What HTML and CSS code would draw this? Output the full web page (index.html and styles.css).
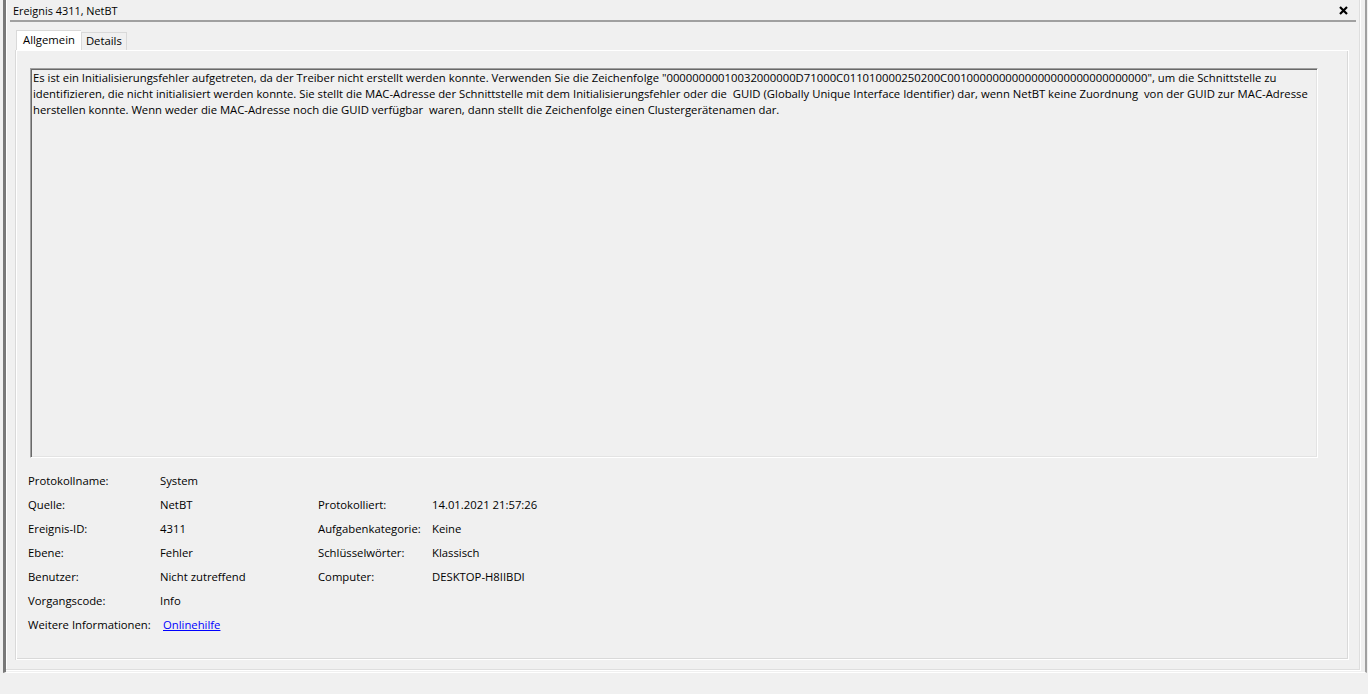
FILE: index.html
```html
<!DOCTYPE html>
<html lang="de">
<head>
    <meta charset="UTF-8">
    <title>Ereignis 4311, NetBT</title>
    <link rel="stylesheet" href="styles.css">
</head>
<body>
<div class="window">
    <div class="frame">
        <div class="titlebar">
            <span class="title">Ereignis 4311, NetBT</span>
            <span class="close">
                <svg width="9" height="9" viewBox="0 0 9 9"><path d="M1 1L8 8M8 1L1 8" stroke="#000" stroke-width="2.2" fill="none"/></svg>
            </span>
        </div>
        <div class="tabs">
            <div class="tab active">Allgemein</div>
            <div class="tab">Details</div>
        </div>
        <div class="panel">
            <div class="description">Es ist ein Initialisierungsfehler aufgetreten, da der Treiber nicht erstellt werden konnte. Verwenden Sie die Zeichenfolge "00000000010032000000D71000C011010000250200C0010000000000000000000000000000", um die Schnittstelle zu<br>identifizieren, die nicht initialisiert werden konnte. Sie stellt die MAC-Adresse der Schnittstelle mit dem Initialisierungsfehler oder die&nbsp; GUID (Globally Unique Interface Identifier) dar, wenn NetBT keine Zuordnung&nbsp; von der GUID zur MAC-Adresse<br>herstellen konnte. Wenn weder die MAC-Adresse noch die GUID verfügbar&nbsp; waren, dann stellt die Zeichenfolge einen Clustergerätenamen dar.</div>
            <div class="props">
                <div class="label">Protokollname:</div><div class="value">System</div><div></div><div></div>
                <div class="label">Quelle:</div><div class="value">NetBT</div><div class="label">Protokolliert:</div><div class="value">14.01.2021 21:57:26</div>
                <div class="label">Ereignis-ID:</div><div class="value">4311</div><div class="label">Aufgabenkategorie:</div><div class="value">Keine</div>
                <div class="label">Ebene:</div><div class="value">Fehler</div><div class="label">Schlüsselwörter:</div><div class="value">Klassisch</div>
                <div class="label">Benutzer:</div><div class="value">Nicht zutreffend</div><div class="label">Computer:</div><div class="value">DESKTOP-H8IIBDI</div>
                <div class="label">Vorgangscode:</div><div class="value">Info</div><div></div><div></div>
                <div class="label">Weitere Informationen:</div><div class="value"><a href="#" class="help-link">Onlinehilfe</a></div><div></div><div></div>
            </div>
        </div>
    </div>
</div>
</body>
</html>
```

FILE: styles.css
```css
body {
    margin: 0;
    background: #f0f0f0;
    font-family: "Open Sans", "Noto Sans", sans-serif;
    font-size: 11.3px;
    color: #000;
}
.window {
    margin-left: 3px;
    width: 1364px;
    height: 673px;
    box-sizing: border-box;
    border-left: 3px solid #787878;
    border-right: 2px solid #a0a0a0;
    border-bottom: 1px solid #fff;
    box-shadow: 0 2px 0 #e0e0e0;
}
.frame {
    width: 1355px;
    height: 671px;
    box-sizing: border-box;
    border-right: 1px solid #fff;
    border-bottom: 1px solid #fff;
    box-shadow: inset -1px -1px 0 #dedede, inset 1px 0 0 #fff;
    display: flex;
    flex-direction: column;
}
.titlebar {
    margin: 0 4px 0 4px;
    height: 20px;
    border-bottom: 2px solid #a0a0a0;
    display: flex;
    align-items: center;
    justify-content: space-between;
    padding: 0 8px 0 3px;
    font-size: 10.9px;
}
.close {
    display: flex;
}
.tabs {
    display: flex;
    align-items: flex-end;
    margin: 8px 0 0 10px;
    height: 20px;
}
.tab {
    box-sizing: border-box;
    height: 18px;
    padding: 0 4px 0 4px;
    border: 1px solid #d9d9d9;
    border-bottom: none;
    line-height: 15px;
}
.tab.active {
    height: 20px;
    background: #fff;
    padding: 0 6px 0 6px;
    line-height: 17px;
    border-right: none;
}
.panel {
    margin: 0 11px 10px 10px;
    flex: 1;
    border: 1px solid #fff;
    box-shadow: inset -1px -1px 0 #d9d9d9, -1px 0 0 #d9d9d9;
}
.description {
    margin: 17px 0 0 13px;
    width: 1288px;
    height: 390px;
    box-sizing: border-box;
    border-top: 1px solid #a0a0a0;
    border-left: 1px solid #a0a0a0;
    border-right: 1px solid #fff;
    border-bottom: 1px solid #fff;
    box-shadow: inset 1px 1px 0 #696969, inset -1px -1px 0 #e3e3e3;
    padding: 1px 2px;
    line-height: 16px;
    white-space: nowrap;
    overflow: hidden;
}
.props {
    margin: 10px 0 0 11px;
    display: grid;
    grid-template-columns: 132px 158px 114px auto;
    grid-auto-rows: 24px;
    align-items: center;
}
.help-link {
    color: #0000ff;
    margin-left: 3px;
}
```
